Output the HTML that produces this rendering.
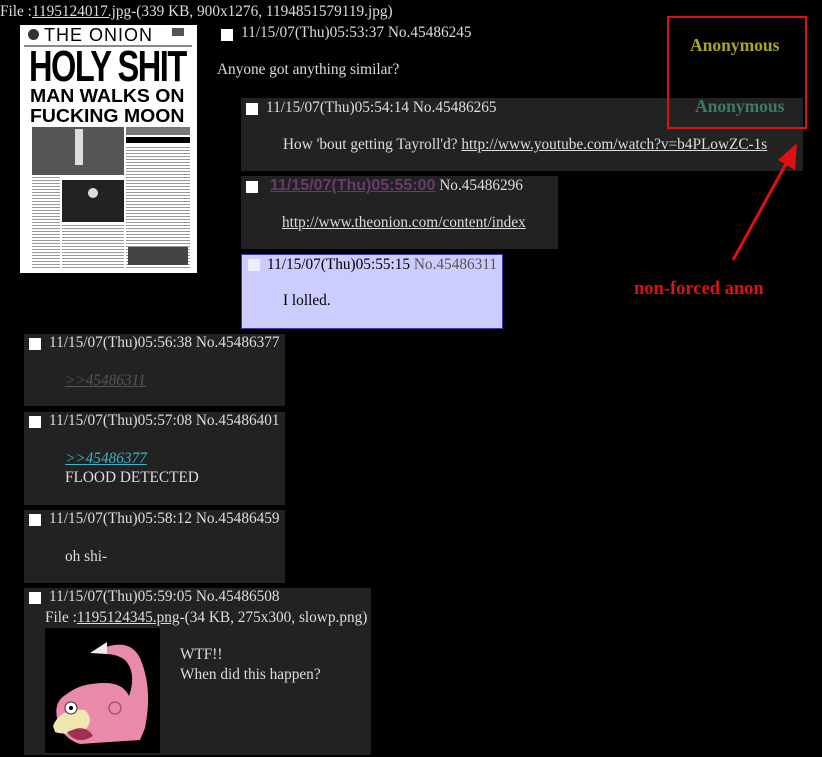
<!DOCTYPE html>
<html><head><meta charset="utf-8"><style>
body{margin:0;background:#000;width:822px;height:757px;overflow:hidden;position:relative;font-family:"Liberation Serif",serif;font-size:15.3px;color:#ddd}
.a{position:absolute;white-space:nowrap}
.box{position:absolute;background:#222}
.cb{position:absolute;width:12px;height:12px;background:#fff}
u{text-decoration:underline}
.on{position:absolute;left:20px;top:25px;width:177px;height:248px;background:#fff;overflow:hidden}
.on div{position:absolute;white-space:nowrap}
.g{background:repeating-linear-gradient(#999 0 1px,#fff 1px 3px)}
</style></head><body>
<div class="a" style="left:0;top:3px">File :<u>1195124017.jpg</u>-(339 KB, 900x1276, 1194851579119.jpg)</div>

<div class="on">
 <div style="left:8px;top:4px;width:11px;height:11px;border-radius:50%;background:#333"></div>
 <div style="left:24px;top:0px;font:18px 'Liberation Sans',sans-serif;color:#000;letter-spacing:1px">THE ONION</div>
 <div style="left:152px;top:3px;width:12px;height:8px;background:#555"></div>
 <div style="left:4px;top:20px;width:168px;height:2px;background:#888"></div>
 <div style="left:9px;top:21px;font:bold 44px/42px 'Liberation Sans',sans-serif;color:#000;transform:scaleX(0.74);transform-origin:0 0;letter-spacing:-2px">HOLY SHIT</div>
 <div style="left:10px;top:61px;font:bold 18px/20px 'Liberation Sans',sans-serif;color:#000;transform:scaleX(1.08);transform-origin:0 0">MAN WALKS ON<br>FUCKING MOON</div>
 <div style="left:12px;top:102px;width:92px;height:48px;background:#555"></div>
 <div style="left:55px;top:104px;width:8px;height:36px;background:#ddd"></div>
 <div style="left:106px;top:102px;width:64px;height:8px;background:#777"></div>
 <div style="left:106px;top:112px;width:64px;height:6px;background:#000"></div>
 <div class="g" style="left:106px;top:122px;width:64px;height:122px"></div>
 <div class="g" style="left:12px;top:152px;width:28px;height:92px"></div>
 <div style="left:42px;top:155px;width:62px;height:42px;background:#222"></div>
 <div style="left:68px;top:163px;width:10px;height:10px;border-radius:50%;background:#ddd"></div>
 <div class="g" style="left:42px;top:200px;width:62px;height:44px"></div>
 <div style="left:108px;top:222px;width:60px;height:18px;background:#444"></div>
</div>

<div class="cb" style="left:221px;top:29px"></div>
<div class="a" style="left:241px;top:24px">11/15/07(Thu)05:53:37 No.45486245</div>
<div class="a" style="left:217px;top:61px">Anyone got anything similar?</div>

<div class="box" style="left:241px;top:98px;width:562px;height:73px"></div>
<div class="cb" style="left:246px;top:103px"></div>
<div class="a" style="left:266px;top:99px">11/15/07(Thu)05:54:14 No.45486265</div>
<div class="a" style="left:695px;top:96px;font-weight:bold;font-size:17.5px;color:#3b7a6a">Anonymous</div>
<div class="a" style="left:283px;top:136px">How 'bout getting Tayroll'd? <u>http://www.youtube.com/watch?v=b4PLowZC-1s</u></div>

<div class="box" style="left:241px;top:176px;width:317px;height:73px"></div>
<div class="cb" style="left:246px;top:181px"></div>
<div class="a" style="left:270px;top:177px"><u style="font:bold 16px 'Liberation Sans',sans-serif;color:#6a3a6e">11/15/07(Thu)05:55:00</u> No.45486296</div>
<div class="a" style="left:282px;top:214px"><u>http://www.theonion.com/content/index</u></div>

<div style="position:absolute;left:241px;top:254px;width:260px;height:73px;background:#ccccff;border:1px solid #3a3aa8"></div>
<div class="cb" style="left:248px;top:259px;background:#eef"></div>
<div class="a" style="left:267px;top:256px;color:#000">11/15/07(Thu)05:55:15 <span style="color:#555">No.45486311</span></div>
<div class="a" style="left:283px;top:292px;color:#000">I lolled.</div>

<div class="box" style="left:24px;top:334px;width:261px;height:72px"></div>
<div class="cb" style="left:29px;top:338px"></div>
<div class="a" style="left:49px;top:334px">11/15/07(Thu)05:56:38 No.45486377</div>
<div class="a" style="left:65px;top:372px;font-style:italic;color:#555"><u>&gt;&gt;45486311</u></div>

<div class="box" style="left:24px;top:412px;width:261px;height:93px"></div>
<div class="cb" style="left:29px;top:416px"></div>
<div class="a" style="left:49px;top:412px">11/15/07(Thu)05:57:08 No.45486401</div>
<div class="a" style="left:65px;top:450px;font-style:italic;color:#3ab8c8"><u>&gt;&gt;45486377</u></div>
<div class="a" style="left:65px;top:469px">FLOOD DETECTED</div>

<div class="box" style="left:24px;top:510px;width:261px;height:73px"></div>
<div class="cb" style="left:29px;top:514px"></div>
<div class="a" style="left:49px;top:510px">11/15/07(Thu)05:58:12 No.45486459</div>
<div class="a" style="left:65px;top:548px">oh shi-</div>

<div class="box" style="left:24px;top:588px;width:347px;height:167px"></div>
<div class="cb" style="left:29px;top:592px"></div>
<div class="a" style="left:49px;top:588px">11/15/07(Thu)05:59:05 No.45486508</div>
<div class="a" style="left:45px;top:609px">File :<u>1195124345.png</u>-(34 KB, 275x300, slowp.png)</div>
<svg style="position:absolute;left:45px;top:628px" width="115" height="125" viewBox="0 0 115 125">
<rect width="115" height="125" fill="#000"/>
<path d="M58 20 Q85 10 95 30 Q108 60 100 100 L95 112 L35 116 Q22 112 15 100 Q5 75 22 66 Q35 55 60 55 Q78 55 84 68 Q92 45 80 32 Q72 26 60 26Z" fill="#e88aa8"/>
<path d="M45 25 L62 14 L62 26Z" fill="#f5e8ee"/>
<path d="M8 98 Q15 80 40 82 Q50 92 40 102 Q22 108 10 104Z" fill="#efe6b0"/>
<path d="M22 104 Q32 118 48 108 Q42 98 30 101Z" fill="#a03050"/>
<circle cx="26" cy="80" r="6" fill="#fff" stroke="#333"/><circle cx="26" cy="80" r="2" fill="#000"/>
<circle cx="70" cy="80" r="6" fill="none" stroke="#b05070" stroke-width="1.5"/>
</svg>
<div class="a" style="left:180px;top:646px">WTF!!</div>
<div class="a" style="left:180px;top:666px">When did this happen?</div>

<div style="position:absolute;left:667px;top:16px;width:136px;height:109px;border:2px solid #e01010"></div>
<div class="a" style="left:690px;top:35px;font-weight:bold;font-size:17.5px;color:#a8a820">Anonymous</div>
<svg style="position:absolute;left:0;top:0" width="822" height="757">
<line x1="733" y1="260" x2="787" y2="162" stroke="#e01010" stroke-width="3"/>
<polygon points="797,143 778,160 795,170" fill="#e01010"/>
</svg>
<div class="a" style="left:634px;top:279px;font-weight:bold;font-size:18.5px;color:#e01010">non-forced anon</div>
</body></html>
